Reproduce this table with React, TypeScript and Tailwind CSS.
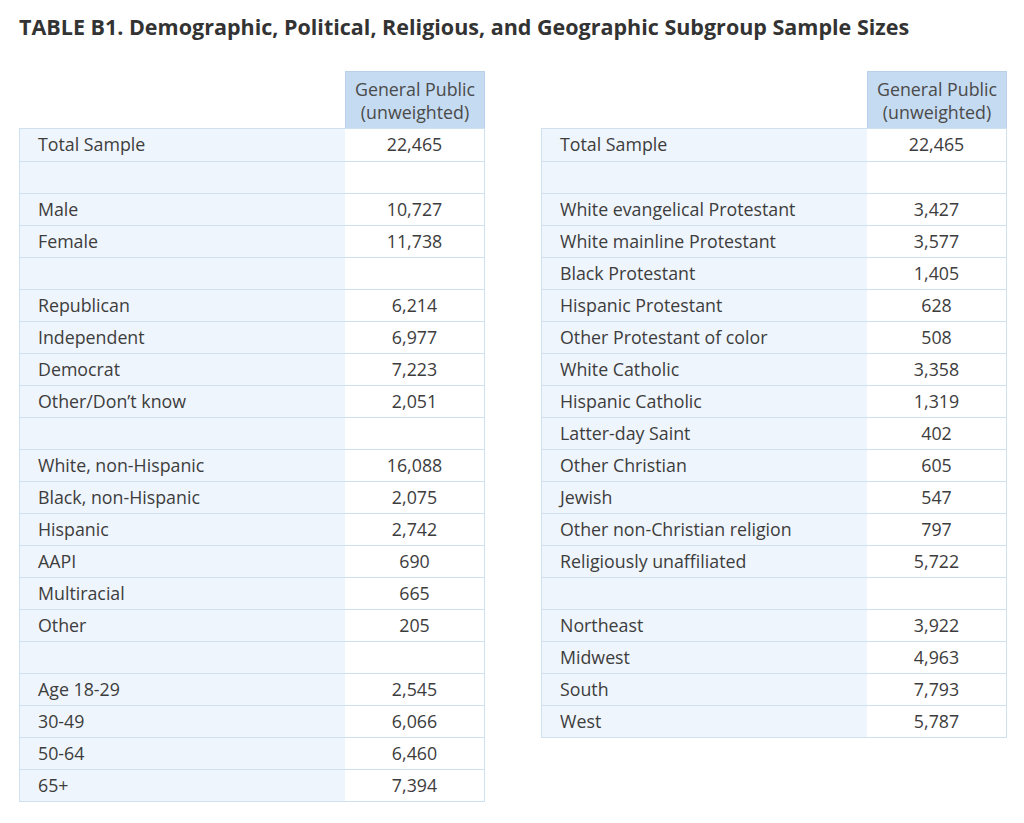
import React from 'react';

type Row = [string, string];

const leftRows: Row[] = [
  ['Total Sample', '22,465'],
  ['', ''],
  ['Male', '10,727'],
  ['Female', '11,738'],
  ['', ''],
  ['Republican', '6,214'],
  ['Independent', '6,977'],
  ['Democrat', '7,223'],
  ['Other/Don\u2019t know', '2,051'],
  ['', ''],
  ['White, non-Hispanic', '16,088'],
  ['Black, non-Hispanic', '2,075'],
  ['Hispanic', '2,742'],
  ['AAPI', '690'],
  ['Multiracial', '665'],
  ['Other', '205'],
  ['', ''],
  ['Age 18-29', '2,545'],
  ['30-49', '6,066'],
  ['50-64', '6,460'],
  ['65+', '7,394'],
];

const rightRows: Row[] = [
  ['Total Sample', '22,465'],
  ['', ''],
  ['White evangelical Protestant', '3,427'],
  ['White mainline Protestant', '3,577'],
  ['Black Protestant', '1,405'],
  ['Hispanic Protestant', '628'],
  ['Other Protestant of color', '508'],
  ['White Catholic', '3,358'],
  ['Hispanic Catholic', '1,319'],
  ['Latter-day Saint', '402'],
  ['Other Christian', '605'],
  ['Jewish', '547'],
  ['Other non-Christian religion', '797'],
  ['Religiously unaffiliated', '5,722'],
  ['', ''],
  ['Northeast', '3,922'],
  ['Midwest', '4,963'],
  ['South', '7,793'],
  ['West', '5,787'],
];

const SampleTable: React.FC<{ rows: Row[] }> = ({ rows }) => (
  <div className="w-[466px]">
    <div className="flex">
      <div className="w-[326px]" />
      <div className="flex h-[57px] w-[140px] flex-col items-center justify-center border border-b-0 border-[#b8d0e8] bg-[#c5dbf1] pt-[2px] text-[17.8px] leading-[23px] text-[#4a4a4a]">
        <span>General Public</span>
        <span>(unweighted)</span>
      </div>
    </div>
    <div className="border border-[#cfe0ef]">
      {rows.map(([label, value], i) => (
        <div
          key={i}
          className={`flex h-[32px] ${i > 0 ? 'border-t border-[#cfe0ef]' : ''}`}
        >
          <div className="flex w-[325px] items-center bg-[#eff5fc] pb-[1px] pl-[18px]">{label}</div>
          <div className="flex flex-1 items-center justify-center bg-white pb-[1px]">{value}</div>
        </div>
      ))}
    </div>
  </div>
);

export default function App() {
  return (
    <div className="min-h-[823px] w-[1024px] bg-white font-['Open_Sans',sans-serif] text-[17.8px] text-[#3d3d3d]">
      <h1 className="pl-[19px] pt-[13px] text-[21.5px] font-bold leading-[28px] text-[#333]">
        TABLE B1. Demographic, Political, Religious, and Geographic Subgroup Sample Sizes
      </h1>
      <div className="mt-[30px] flex items-start gap-[56px] pl-[19px]">
        <SampleTable rows={leftRows} />
        <SampleTable rows={rightRows} />
      </div>
    </div>
  );
}
